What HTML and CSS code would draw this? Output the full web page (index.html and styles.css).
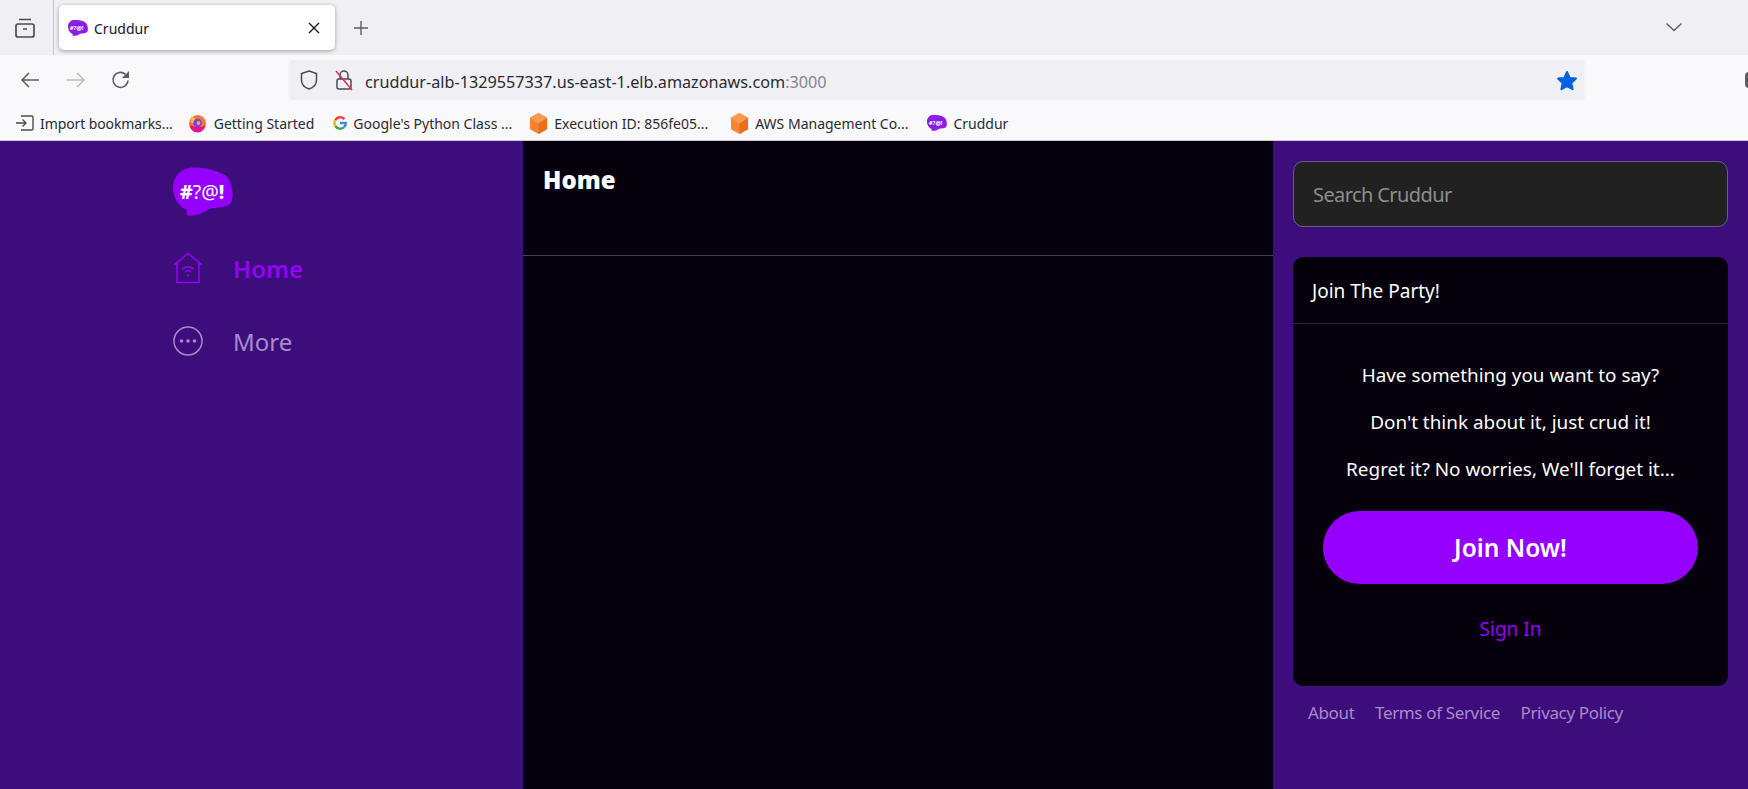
FILE: index.html
```html
<!DOCTYPE html>
<html lang="en">
  <head>
    <meta charset="UTF-8" />
    <meta name="viewport" content="width=device-width, initial-scale=1.0" />
    <title>Cruddur</title>
    <link rel="stylesheet" href="styles.css">
  </head>
  <body>
    <svg class="defs" width="0" height="0">
      <symbol id="bubble" viewBox="0 0 60 50">
        <path d="M20 .5C9 .5 0 9 0 21c0 10 6 19 14 22 0 2-1 4 .5 5.500C22 49 30 47 36 42c8-2 18-1 22-6 3-6 2-21-5-27C45 3 32 .5 20 .5z" />
      </symbol>
      <symbol id="cube" viewBox="0 0 20 22">
        <path fill="#f58536" d="M10 0l9 5v12l-9 5-9-5V5z" />
        <path fill="#e8701a" d="M10 11l9-6v12l-9 5z" />
        <path fill="#fb9a4f" d="M10 0l9 5-9 6-9-6z" />
      </symbol>
    </svg>

    <div class="tabstrip">
      <svg class="tabs-icon" width="20" height="20" viewBox="0 0 20 20" fill="none" stroke="#4a4a52" stroke-width="1.7">
        <rect x="1" y="6" width="18" height="13" rx="2" />
        <path d="M4 1.5h12M8 11h4" />
      </svg>
      <div class="tab">
        <svg class="fav" width="20" height="18" viewBox="0 0 60 50">
          <use href="#bubble" />
          <text x="5" y="32" class="fav-text">#?@!</text>
        </svg>
        <span class="tab-title">Cruddur</span>
        <svg class="tab-close" width="12" height="12" viewBox="0 0 12 12" stroke="#15141a" stroke-width="1.4">
          <path d="M1 1l10 10M11 1L1 11" />
        </svg>
      </div>
      <svg class="tab-new" width="16" height="16" viewBox="0 0 16 16" stroke="#5b5b66" stroke-width="1.4">
        <path d="M8 1v14M1 8h14" />
      </svg>
      <svg class="tab-list" width="18" height="10" viewBox="0 0 18 10" fill="none" stroke="#5b5b66" stroke-width="1.4">
        <path d="M1.5 1.5L9 8.5l7.5-7" />
      </svg>
    </div>

    <div class="toolbar">
      <svg class="tool" width="20" height="18" viewBox="0 0 20 18" fill="none" stroke="#5b5b66" stroke-width="1.5">
        <path d="M19 9H2M9 2L2 9l7 7" />
      </svg>
      <svg class="tool" width="20" height="18" viewBox="0 0 20 18" fill="none" stroke="#bcbcc2" stroke-width="1.5">
        <path d="M1 9h17M11 2l7 7-7 7" />
      </svg>
      <svg class="tool" width="20" height="20" viewBox="0 0 20 20" fill="none" stroke="#5b5b66" stroke-width="1.6">
        <path d="M17 10.500a7.500 7.500 0 1 1-2.500-6.200" />
        <path fill="#5b5b66" stroke="none" d="M18 1v7h-7z" />
      </svg>
      <div class="urlbar">
        <svg width="18" height="20" viewBox="0 0 18 20" fill="none" stroke="#4a4a52" stroke-width="1.5">
          <path d="M9 1l7.500 2.500V10c0 4-3 7.500-7.500 9C4.500 17.500 1.500 14 1.500 10V3.500z" />
        </svg>
        <svg class="lock" width="18" height="22" viewBox="0 0 18 22" fill="none" stroke-width="1.500">
          <rect x="2" y="10" width="14" height="10" rx="2" stroke="#4a4a52" />
          <path d="M5 10V6a4 4 0 0 1 8 0v4" stroke="#4a4a52" />
          <path d="M1 2l16 19" stroke="#e22850" />
        </svg>
        <span class="url">cruddur-alb-1329557337.us-east-1.elb.amazonaws.com<span class="url-port">:3000</span></span>
        <svg class="star" width="22" height="21" viewBox="0 0 22 21">
          <path fill="#0060df" stroke="#0060df" stroke-width="2" stroke-linejoin="round" d="M11 2l2.700 5.900 6.300.7-4.700 4.300 1.300 6.300L11 16.100l-5.600 3.100 1.300-6.300L2 8.600l6.300-.7z" />
        </svg>
      </div>
      <svg class="ext" width="14" height="20" viewBox="0 0 14 20">
        <rect x="0" y="2" width="14" height="16" rx="4" fill="#5b5b66" />
      </svg>
    </div>

    <div class="bookmarks">
      <a class="mark mark-import" href="#">
        <svg width="18" height="16" viewBox="0 0 18 16" fill="none" stroke="#4a4a52" stroke-width="1.4">
          <path d="M0 8h10M6.500 4.500L10 8l-3.500 3.500M5 1h10.500a1.500 1.500 0 0 1 1.500 1.500v11a1.500 1.500 0 0 1-1.500 1.500H5" />
        </svg>
        Import bookmarks...
      </a>
      <a class="mark mark-fx" href="#">
        <svg width="19" height="20" viewBox="0 0 20 20">
          <circle cx="10" cy="10.500" r="9" fill="#ff7139" />
          <path fill="#ffbd4f" d="M3 3c1 3 0 4 0 7h6C9 6 6 4 3 3z" />
          <path fill="#e31587" d="M2 12a8 8 0 0 0 16 0c-3 3-10 3-16 0z" />
          <circle cx="10" cy="10" r="4.500" fill="#7542e5" />
          <circle cx="11" cy="10" r="2" fill="#ffa436" />
        </svg>
        Getting Started
      </a>
      <a class="mark mark-g" href="#">
        <svg width="14" height="14" viewBox="0 0 14 14" fill="none" stroke-width="2.500">
          <path stroke="#ea4335" d="M11.500 3.100A5.700 5.700 0 0 0 2.300 4.200" />
          <path stroke="#fbbc05" d="M2.300 4.200a5.700 5.700 0 0 0 0 5.600" />
          <path stroke="#34a853" d="M2.300 9.800a5.700 5.700 0 0 0 8.800 1.400" />
          <path stroke="#4285f4" d="M11.100 11.200A5.700 5.700 0 0 0 12.700 7H7" />
        </svg>
        Google's Python Class ...
      </a>
      <a class="mark mark-aws" href="#">
        <svg width="19" height="21"><use href="#cube" /></svg>
        Execution ID: 856fe05...
      </a>
      <a class="mark mark-aws2" href="#">
        <svg width="19" height="21"><use href="#cube" /></svg>
        AWS Management Co...
      </a>
      <a class="mark mark-crud" href="#">
        <svg class="fav" width="20" height="18" viewBox="0 0 60 50">
          <use href="#bubble" />
          <text x="5" y="32" class="fav-text">#?@!</text>
        </svg>
        Cruddur
      </a>
    </div>

    <main class="app">
      <nav class="sidebar">
        <svg class="logo" width="60" height="50" viewBox="0 0 60 50">
          <use href="#bubble" />
          <text x="7" y="32" class="logo-text">#<tspan class="logo-thin">?@</tspan>!</text>
        </svg>
        <a class="nav-item active" href="#">
          <svg width="30" height="32" viewBox="0 0 30 32" fill="none" stroke="#9500ff" stroke-width="1.500">
            <path d="M1 13L15 1.500 29 13M4 11v19.500h22V11" />
            <path d="M9.500 17a8 8 0 0 1 11 0M12 20a4.500 4.500 0 0 1 6 0" />
            <circle cx="15" cy="23.500" r="1" fill="#9500ff" stroke="none" />
          </svg>
          <span>Home</span>
        </a>
        <a class="nav-item" href="#">
          <svg width="30" height="30" viewBox="0 0 30 30" fill="none" stroke="#a88bcb" stroke-width="1.500">
            <circle cx="15" cy="15" r="14" />
            <g fill="#a88bcb" stroke="none">
              <circle cx="8.500" cy="15" r="1.800" />
              <circle cx="15" cy="15" r="1.800" />
              <circle cx="21.500" cy="15" r="1.800" />
            </g>
          </svg>
          <span>More</span>
        </a>
      </nav>

      <section class="feed">
        <h1 class="feed-title">Home</h1>
      </section>

      <aside class="widgets">
        <div class="search">Search Cruddur</div>
        <div class="join">
          <div class="join-title">Join The Party!</div>
          <div class="join-body">
            <p>Have something you want to say?</p>
            <p>Don't think about it, just crud it!</p>
            <p>Regret it? No worries, We'll forget it...</p>
            <a class="btn-join" href="#">Join Now!</a>
            <a class="btn-signin" href="#">Sign In</a>
          </div>
        </div>
        <div class="footer-links">
          <a href="#">About</a>
          <a href="#">Terms of Service</a>
          <a href="#">Privacy Policy</a>
        </div>
      </aside>
    </main>
  </body>
</html>
```

FILE: styles.css
```css
* {
  box-sizing: border-box;
}

html,
body {
  margin: 0;
  height: 789px;
  overflow: hidden;
}

body {
  font-family: "Noto Sans", Arial, sans-serif;
  display: flex;
  flex-direction: column;
  background-color: #3d0d7b;
}

a {
  text-decoration: none;
  color: inherit;
}

.defs {
  position: absolute;
}

.fav-text {
  font-family: "Noto Sans", sans-serif;
  font-size: 18px;
  font-weight: 700;
  fill: #fff;
}

/* browser chrome */
.tabstrip {
  height: 55px;
  flex: none;
  display: flex;
  align-items: center;
  background-color: #f0f0f4;
  color: #15141a;
}

.tabs-icon {
  margin-left: 15px;
}

.tab {
  width: 276px;
  height: 45px;
  margin-left: 24px;
  padding: 0 15px 0 9px;
  display: flex;
  align-items: center;
  gap: 6px;
  background-color: #fff;
  border-radius: 5px;
  box-shadow: 0 1px 4px rgba(0, 0, 0, 0.35);
  font-size: 14px;
  position: relative;
}

.tab::before {
  content: "";
  position: absolute;
  left: -6px;
  top: -5px;
  width: 1px;
  height: 55px;
  background-color: #c4c4c9;
}

.fav {
  fill: #8a1ee6;
  flex: none;
}

.tab-title {
  flex: 1;
  padding-top: 1px;
}

.tab-new {
  margin-left: 18px;
}

.tab-list {
  margin-left: auto;
  margin-right: 65px;
  position: relative;
  top: -1px;
}

.toolbar {
  height: 45px;
  flex: none;
  display: flex;
  align-items: center;
  padding-top: 5px;
  background-color: #f9f9fb;
  overflow: hidden;
}

.tool {
  flex: none;
  margin-left: 25.500px;
}

.tool:first-child {
  margin-left: 20px;
}

.urlbar {
  width: 1296px;
  height: 40px;
  margin-left: 158px;
  padding: 0 7px 0 11px;
  display: flex;
  align-items: center;
  background-color: #f0f0f4;
  border-radius: 4px;
  flex: none;
}

.lock {
  margin-left: 17px;
}

.url {
  margin-left: 12px;
  padding-top: 3px;
  font-size: 16.2px;
  color: #2b2a33;
  white-space: nowrap;
}

.url-port {
  color: #85858c;
}

.star {
  margin-left: auto;
}

.ext {
  flex: none;
  margin-left: 160px;
}

.bookmarks {
  height: 40px;
  flex: none;
  display: flex;
  align-items: center;
  padding-top: 6px;
  background-color: #f9f9fb;
  font-size: 14px;
  color: #2b2a33;
  white-space: nowrap;
}

.mark {
  display: flex;
  align-items: center;
  gap: 6px;
}

.mark-import {
  margin-left: 16px;
  letter-spacing: -0.1px;
}

.mark-fx {
  margin-left: 15px;
  gap: 7px;
}

.mark-g {
  margin-left: 19px;
}

.mark-aws {
  margin-left: 17px;
}

.mark-aws2 {
  margin-left: 22px;
}

.mark-crud {
  margin-left: 19px;
}

/* cruddur page */
.app {
  flex: 1;
  display: grid;
  grid-template-columns: 523px 750px 475px;
  min-height: 0;
  border-top: 1px solid #cfc8da;
}

.sidebar {
  padding: 26px 0 0 173px;
  display: flex;
  flex-direction: column;
  background-color: #3d0d7b;
}

.logo {
  fill: #9500ff;
  margin-bottom: 35px;
}

.logo-text {
  font-family: "Noto Sans", sans-serif;
  font-size: 19.500px;
  font-weight: 800;
  fill: #fff;
}

.logo-thin {
  font-weight: 400;
}

.nav-item {
  display: flex;
  align-items: center;
  gap: 30px;
  height: 32px;
  margin-bottom: 41px;
  font-size: 24px;
  color: #a88bcb;
}

.nav-item.active {
  color: #9500ff;
  font-weight: 600;
}

.feed {
  background-color: #05000c;
}

.feed-title {
  height: 115px;
  margin: 0;
  padding: 23px 20px 0;
  font-size: 24px;
  line-height: 32px;
  font-weight: 900;
  color: #fff;
  border-bottom: 1px solid #45404f;
}

.widgets {
  padding: 20px 20px 0;
  background-color: #3d0d7b;
}

.search {
  height: 66px;
  padding: 0 19px;
  display: flex;
  align-items: center;
  font-size: 20px;
  letter-spacing: -0.6px;
  color: #8e8e8e;
  background-color: #212121;
  border: 1px solid #6c5a85;
  border-radius: 10px;
}

.join {
  height: 429px;
  margin-top: 30px;
  color: #fff;
  background-color: #05000c;
  border-radius: 10px;
}

.join-title {
  height: 67px;
  padding: 2px 19px 0;
  display: flex;
  align-items: center;
  font-size: 19px;
  border-bottom: 1px solid #2a2433;
}

.join-body {
  padding: 39px 30px 0;
  display: flex;
  flex-direction: column;
  align-items: center;
  font-size: 18.900px;
}

.join-body p {
  margin: 0 0 22px;
  line-height: 25px;
  white-space: nowrap;
}

.btn-join {
  width: 100%;
  height: 73px;
  margin-top: 7px;
  display: flex;
  align-items: center;
  justify-content: center;
  font-size: 24.500px;
  font-weight: 600;
  background-color: #9500ff;
  border-radius: 40px;
}

.btn-signin {
  margin-top: 32px;
  font-size: 19px;
  color: #9500ff;
}

.footer-links {
  margin-top: 15px;
  padding-left: 15px;
  display: flex;
  gap: 20.500px;
  font-size: 17px;
  letter-spacing: -0.35px;
  color: #a88bcb;
}
```
